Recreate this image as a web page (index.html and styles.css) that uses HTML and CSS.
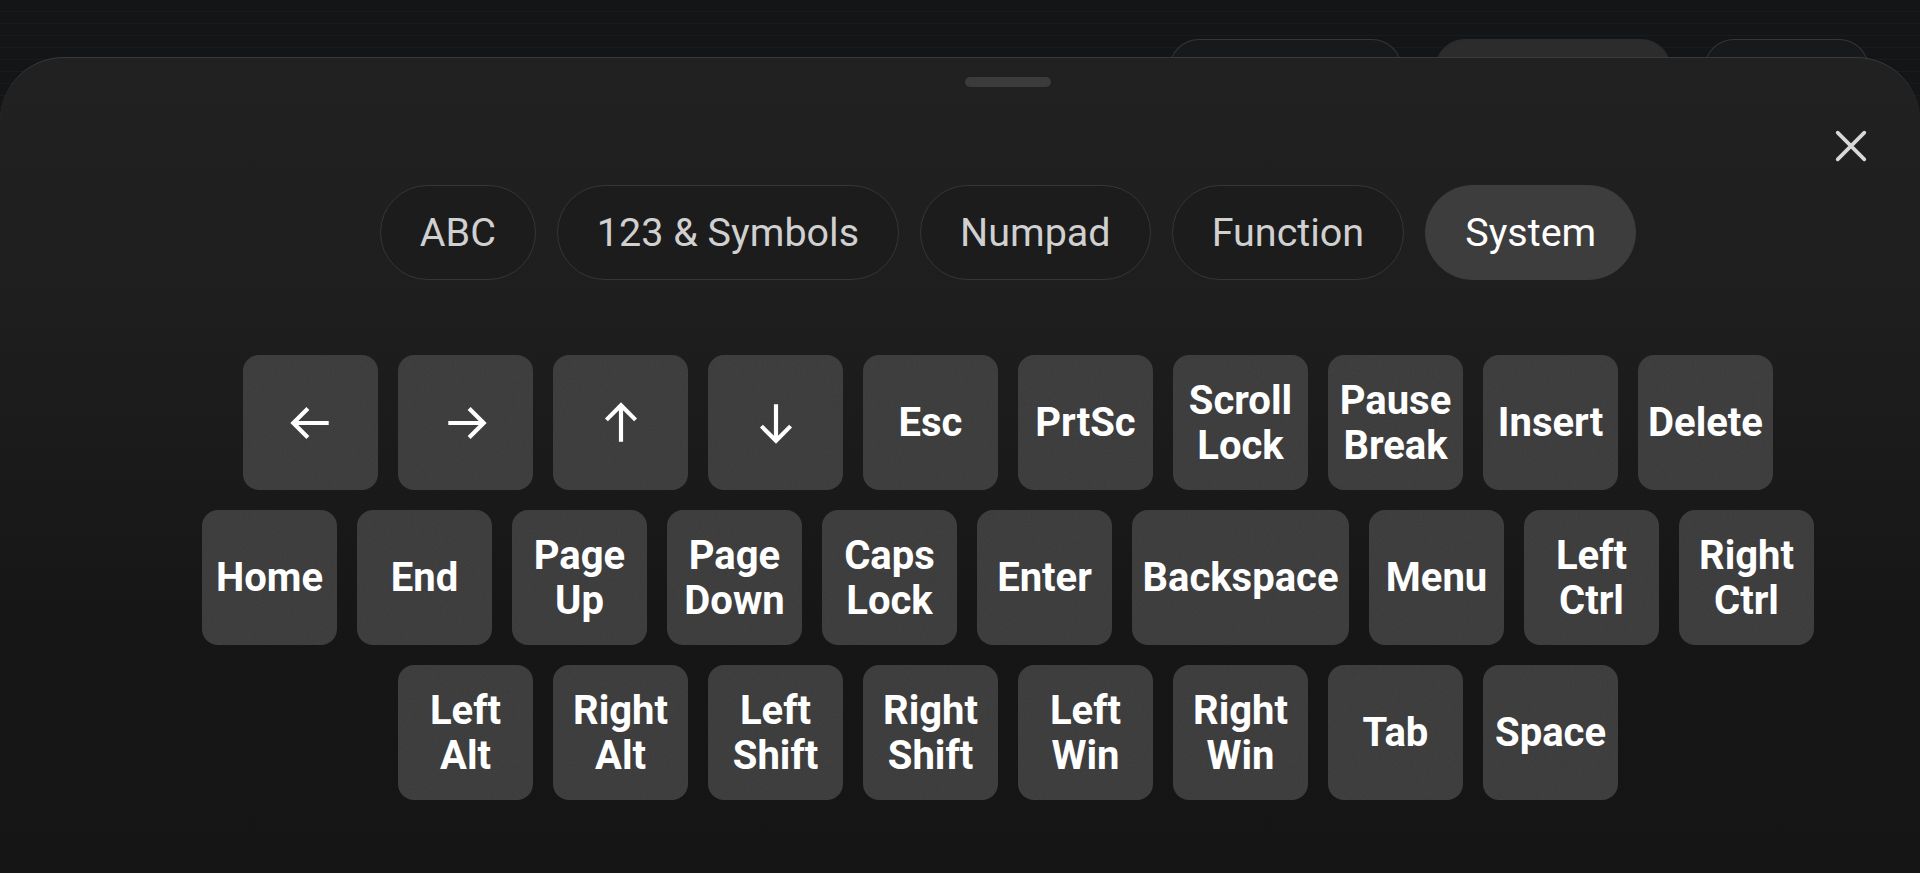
FILE: index.html
```html
<!DOCTYPE html>
<html>
<head>
  <title>Keyboard</title>
  <link rel="stylesheet" href="styles.css">
</head>
<body>
  <!-- pills of the toolbar lying under the sheet -->
  <div class="under">
    <div class="under-pill"></div>
    <div class="under-pill filled"></div>
    <div class="under-pill small"></div>
  </div>

  <div class="sheet">
    <button class="close" aria-label="Close">
      <svg viewBox="0 0 24 24" width="40" height="40"><path d="M4 4L20 20M20 4L4 20" /></svg>
    </button>

    <div class="content">
      <div class="handle"></div>

      <div class="tabs">
        <button class="tab">ABC</button>
        <button class="tab">123 &amp; Symbols</button>
        <button class="tab">Numpad</button>
        <button class="tab">Function</button>
        <button class="tab active">System</button>
      </div>

      <div class="keys">
        <div class="row">
          <div class="key"><svg class="arrow" viewBox="0 0 24 24"><path d="M20.5 12H3.5M10.5 5L3.5 12L10.5 19" /></svg></div>
          <div class="key"><svg class="arrow" viewBox="0 0 24 24"><path d="M3.5 12H20.5M13.5 5L20.5 12L13.5 19" /></svg></div>
          <div class="key"><svg class="arrow" viewBox="0 0 24 24"><path d="M12 21V3.5M5 10.5L12 3.5L19 10.5" /></svg></div>
          <div class="key"><svg class="arrow" viewBox="0 0 24 24"><path d="M12 3V20.5M5 13.5L12 20.5L19 13.5" /></svg></div>
          <div class="key">Esc</div>
          <div class="key">PrtSc</div>
          <div class="key">Scroll<br>Lock</div>
          <div class="key">Pause<br>Break</div>
          <div class="key">Insert</div>
          <div class="key">Delete</div>
        </div>
        <div class="row">
          <div class="key">Home</div>
          <div class="key">End</div>
          <div class="key">Page<br>Up</div>
          <div class="key">Page<br>Down</div>
          <div class="key">Caps<br>Lock</div>
          <div class="key">Enter</div>
          <div class="key wide">Backspace</div>
          <div class="key">Menu</div>
          <div class="key">Left<br>Ctrl</div>
          <div class="key">Right<br>Ctrl</div>
        </div>
        <div class="row">
          <div class="key">Left<br>Alt</div>
          <div class="key">Right<br>Alt</div>
          <div class="key">Left<br>Shift</div>
          <div class="key">Right<br>Shift</div>
          <div class="key">Left<br>Win</div>
          <div class="key">Right<br>Win</div>
          <div class="key">Tab</div>
          <div class="key">Space</div>
        </div>
      </div>
    </div>
  </div>
</body>
</html>
```

FILE: styles.css
```css
html, body {
  margin: 0;
  height: 873px;
  overflow: hidden;
}

body {
  font-family: Roboto, "Liberation Sans", sans-serif;
  background-color: #141517;
  background-image: repeating-linear-gradient(180deg, transparent 0, transparent 11px, rgba(255, 255, 255, 0.025) 11px, rgba(255, 255, 255, 0.025) 12px);
  position: relative;
}

/* Things under the sheet */
.under {
  position: absolute;
  top: 39px;
  left: 1169px;
  display: flex;
  gap: 33px;
}

.under-pill {
  width: 233px;
  height: 60px;
  border-radius: 30px 30px 0 0;
  border: 1.5px solid #34363a;
  border-bottom: none;
  background-color: #18191b;
  box-sizing: border-box;
}

.under-pill.filled {
  width: 236px;
  background-color: #2c2c2c;
  border-color: #2c2c2c;
}

.under-pill.small {
  width: 165px;
}

/* Sheet */
.sheet {
  position: relative;
  margin-top: 57px;
  height: 816px;
  border-radius: 64px 64px 0 0;
  border-top: 1px solid #3a3a3a;
  background: linear-gradient(180deg, #212121 0%, #1e1e1e 30%, #161616 70%, #151515 100%);
  box-sizing: border-box;
  padding-left: 96px;
}

.close {
  position: absolute;
  top: 68px;
  right: 49px;
  width: 40px;
  height: 40px;
  padding: 0;
  border: none;
  background: none;
  cursor: pointer;
}

.close svg path {
  stroke: #d8d8d8;
  stroke-width: 2.2;
  stroke-linecap: round;
  fill: none;
}

.handle {
  width: 86px;
  height: 10px;
  margin: 19px auto 0;
  border-radius: 5px;
  background-color: #3b3b3b;
}

/* Tabs */
.tabs {
  display: flex;
  justify-content: center;
  gap: 21px;
  margin-top: 98px;
}

.tab {
  height: 95px;
  padding: 0 39px;
  border: 1.5px solid #363636;
  border-radius: 48px;
  background-color: #1c1c1c;
  color: #d0d0d0;
  font-family: Roboto, "Liberation Sans", sans-serif;
  font-size: 39.5px;
  cursor: pointer;
}

.tab.active {
  background-color: #3d3d3d;
  border-color: #3d3d3d;
  color: #fff;
}

/* Keys */
.keys {
  display: flex;
  flex-direction: column;
  gap: 20px;
  margin-top: 75px;
}

.row {
  display: flex;
  justify-content: center;
  gap: 20px;
}

.key {
  width: 135px;
  height: 135px;
  border-radius: 16px;
  background-color: #393939;
  background-image: url("data:image/svg+xml,%3Csvg xmlns='http://www.w3.org/2000/svg' width='135' height='135'%3E%3Cfilter id='n'%3E%3CfeTurbulence type='fractalNoise' baseFrequency='0.9' numOctaves='2'/%3E%3CfeColorMatrix values='0 0 0 0 1 0 0 0 0 1 0 0 0 0 1 0 0 0 0.05 0'/%3E%3C/filter%3E%3Crect width='100%25' height='100%25' filter='url(%23n)'/%3E%3C/svg%3E");
  color: #fff;
  font-weight: 700;
  font-size: 40px;
  line-height: 45px;
  text-align: center;
  display: flex;
  align-items: center;
  justify-content: center;
}

.key.wide {
  width: 217px;
}

.arrow {
  width: 50px;
  height: 50px;
}

.arrow path {
  stroke: #fff;
  stroke-width: 2;
  stroke-linecap: butt;
  fill: none;
}
```
